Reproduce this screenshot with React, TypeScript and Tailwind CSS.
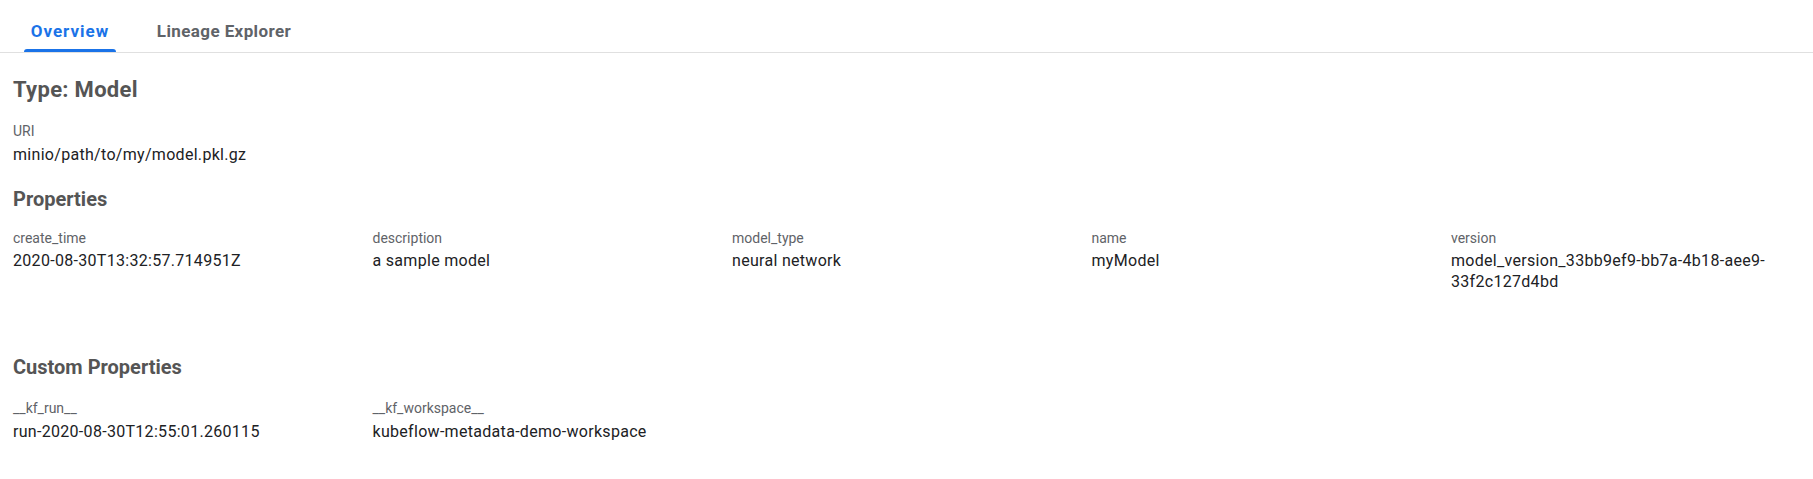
import React from "react";

const properties = [
  { label: "create_time", value: "2020-08-30T13:32:57.714951Z" },
  { label: "description", value: "a sample model" },
  { label: "model_type", value: "neural network" },
  { label: "name", value: "myModel" },
  { label: "version", value: "model_version_33bb9ef9-bb7a-4b18-aee9-33f2c127d4bd" },
];

const customProperties = [
  { label: "__kf_run__", value: "run-2020-08-30T12:55:01.260115" },
  { label: "__kf_workspace__", value: "kubeflow-metadata-demo-workspace" },
];

const Field = ({ label, value }: { label: string; value: string }) => (
  <div className="min-w-0">
    <div className="text-[14px] leading-[20px] text-[#5f6368]">{label}</div>
    <div className="mt-[2.5px] text-[16px] leading-[21px] tracking-[0.3px] text-[#202124] break-words">
      {value}
    </div>
  </div>
);

const SectionTitle = ({ children }: { children: React.ReactNode }) => (
  <h2 className="text-[20px] leading-[28px] font-bold text-[#555555]">{children}</h2>
);

export default function App() {
  return (
    <div className="min-h-screen w-full bg-white font-['Roboto',sans-serif]">
      {/* tabs */}
      <div className="flex h-[53px] gap-[24px] border-b border-[#e0e0e0] pl-[24px]">
        <div className="relative flex w-[92px] justify-center pt-[21px]">
          <span className="text-[17px] leading-[20px] font-bold tracking-[1px] text-[#1a73e8]">
            Overview
          </span>
          <div className="absolute bottom-0 left-0 h-[3px] w-full rounded-t-[3px] bg-[#1a73e8]" />
        </div>
        <div className="flex w-[168px] justify-center pt-[21px]">
          <span className="text-[17px] leading-[20px] font-bold tracking-[0.4px] text-[#5f6368]">
            Lineage Explorer
          </span>
        </div>
      </div>

      <div className="px-[13px]">
        <h1 className="mt-[23px] text-[22px] leading-[28px] font-bold tracking-[0.3px] text-[#555555]">
          Type: Model
        </h1>

        <div className="mt-[17px]">
          <Field label="URI" value="minio/path/to/my/model.pkl.gz" />
        </div>

        <div className="mt-[20px]">
          <SectionTitle>Properties</SectionTitle>
          <div className="mt-[15px] grid grid-cols-5 gap-x-[10.5px]">
            {properties.map((p) => (
              <Field key={p.label} label={p.label} value={p.value} />
            ))}
          </div>
        </div>

        <div className="mt-[61px]">
          <SectionTitle>Custom Properties</SectionTitle>
          <div className="mt-[17px] grid grid-cols-5 gap-x-[10.5px]">
            {customProperties.map((p) => (
              <Field key={p.label} label={p.label} value={p.value} />
            ))}
          </div>
        </div>
      </div>
    </div>
  );
}
